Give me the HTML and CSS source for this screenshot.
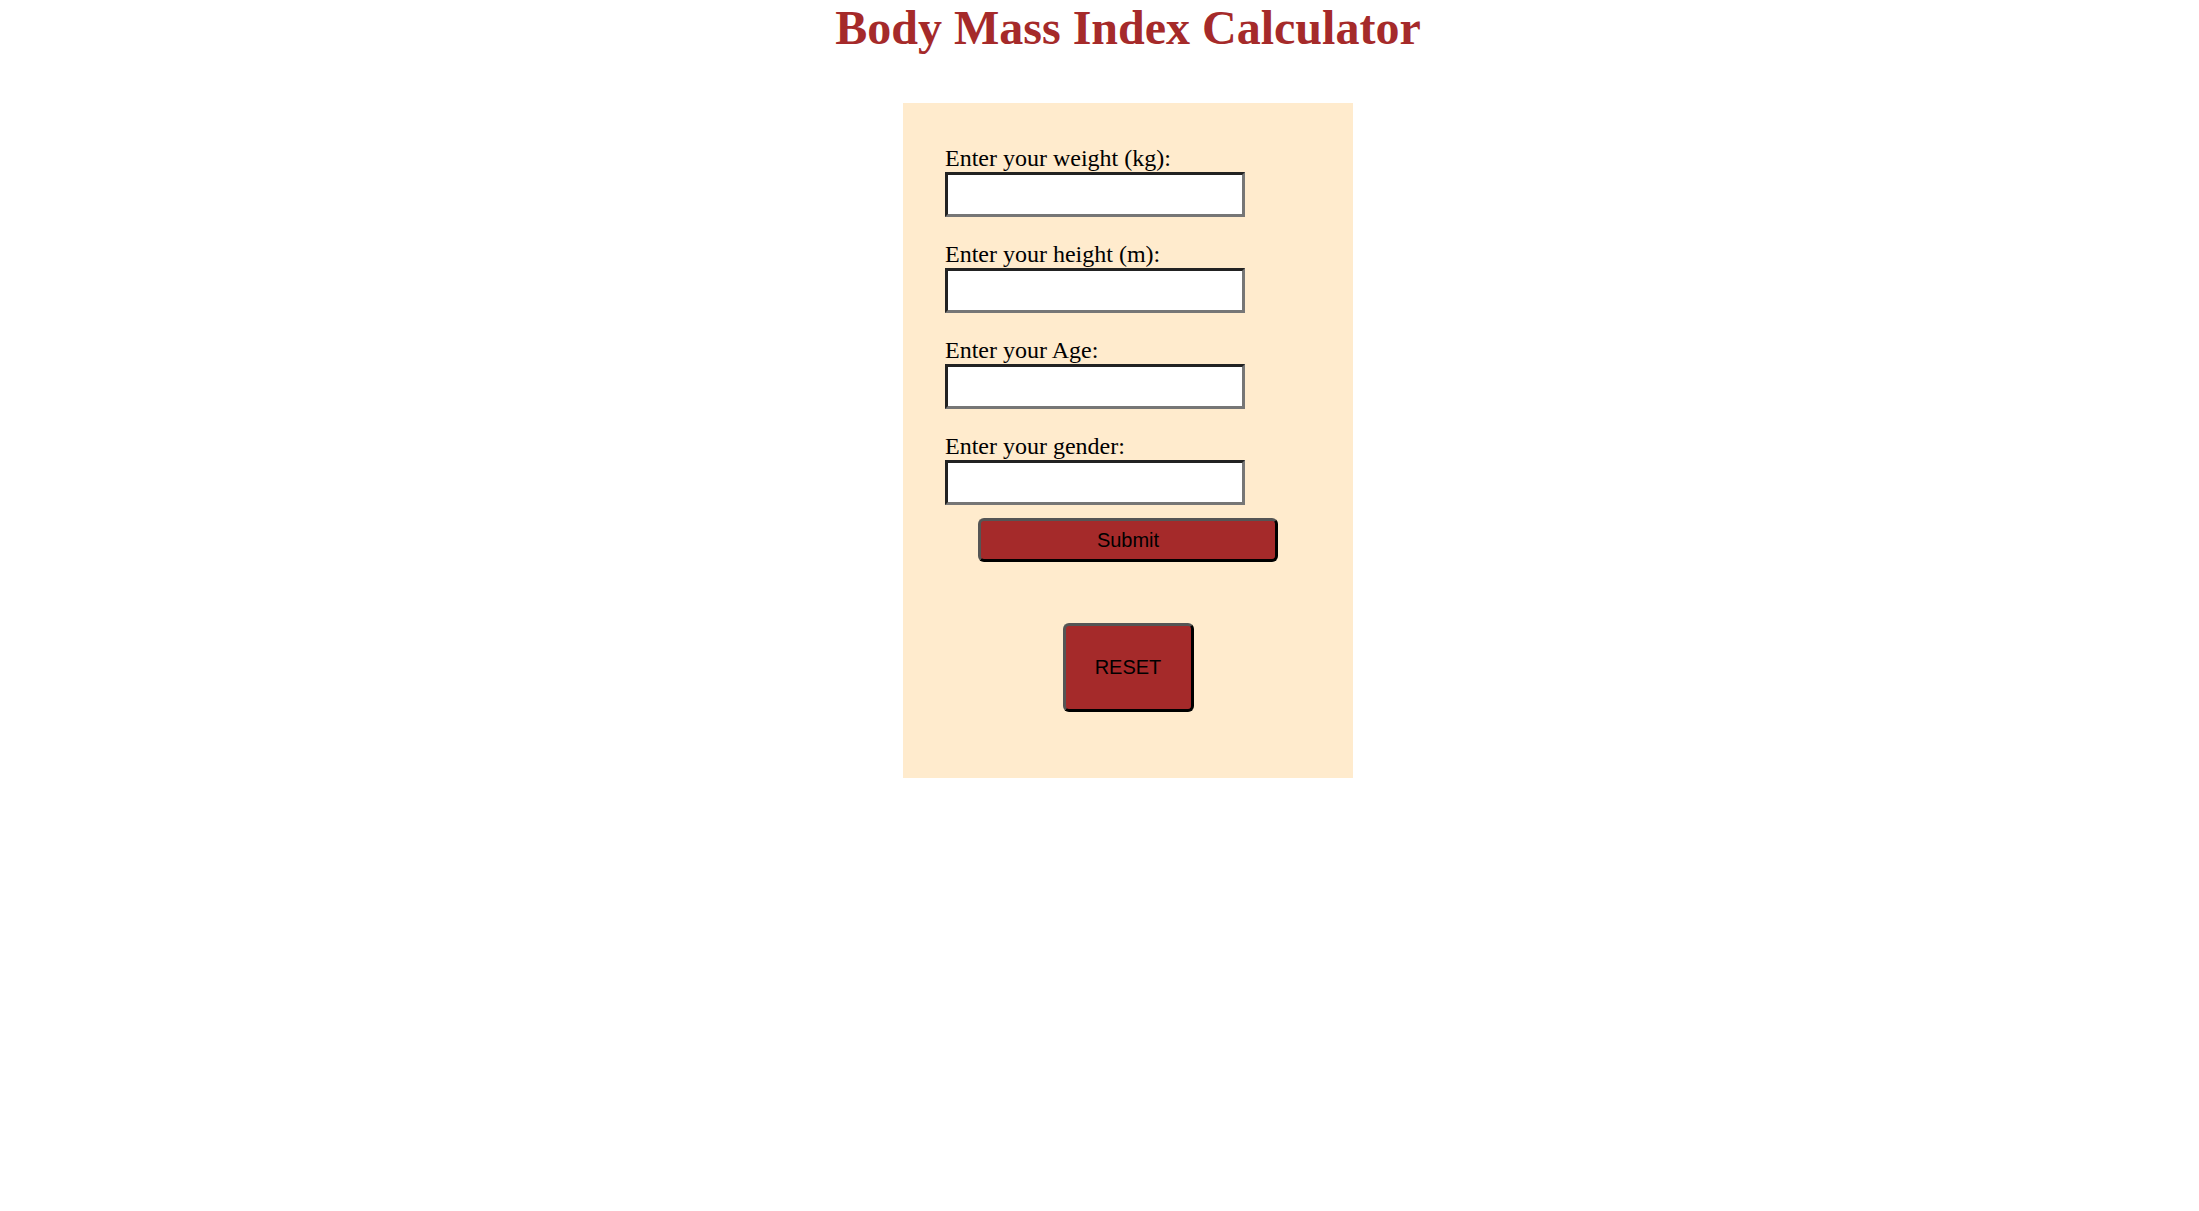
FILE: index.html
```html
<!DOCTYPE html>
<html lang="en">
<head>
<meta charset="utf-8">
<title>Body Mass Index Calculator</title>
<link rel="stylesheet" href="styles.css">
</head>
<body>
<main class="page">
  <h1 class="title">Body Mass Index Calculator</h1>
  <div class="card">
    <form class="form">
      <label class="label" for="weight">Enter your weight (kg):</label>
      <input class="field" type="text" id="weight">
      <label class="label" for="height">Enter your height (m):</label>
      <input class="field" type="text" id="height">
      <label class="label" for="age">Enter your Age:</label>
      <input class="field" type="text" id="age">
      <label class="label" for="gender">Enter your gender:</label>
      <input class="field field-last" type="text" id="gender">
      <button class="btn btn-submit" type="button">Submit</button>
      <button class="btn btn-reset" type="reset">RESET</button>
    </form>
  </div>
</main>
</body>
</html>
```

FILE: styles.css
```css
html, body {
  margin: 0;
  padding: 0;
  background: #ffffff;
}

body {
  font-family: "Liberation Serif", "Times New Roman", serif;
  color: #000000;
}

.page {
  padding-left: 57px;
}

.title {
  margin: 0;
  font-size: 48px;
  font-weight: bold;
  line-height: normal;
  text-align: center;
  color: #a52a2a;
}

.card {
  width: 450px;
  height: 675px;
  box-sizing: border-box;
  margin: 48px auto 0;
  padding: 42px 42px 0;
  background: #ffebcd;
}

.form {
  display: flex;
  flex-direction: column;
  align-items: flex-start;
}

.label {
  display: block;
  font-size: 24px;
  line-height: normal;
}

.field {
  display: block;
  width: 300px;
  height: 45px;
  box-sizing: border-box;
  margin: 0 0 24px;
  padding: 0 3px;
  background: #ffffff;
  border-width: 3px;
  border-style: solid;
  border-color: #222222 #767676 #767676 #222222;
  font-family: "Liberation Sans", Arial, sans-serif;
  font-size: 20px;
}

.field-last {
  margin-bottom: 13px;
}

.btn {
  align-self: center;
  box-sizing: border-box;
  background: #a52a2a;
  color: #000000;
  font-family: "Liberation Sans", Arial, sans-serif;
  font-size: 20px;
  border-width: 3px;
  border-style: solid;
  border-color: #555555 #000000 #000000 #555555;
  border-radius: 6px;
  padding: 0;
  cursor: pointer;
}

.btn-submit {
  width: 300px;
  height: 44px;
}

.btn-reset {
  width: 131px;
  height: 89px;
  margin-top: 61px;
}
```
